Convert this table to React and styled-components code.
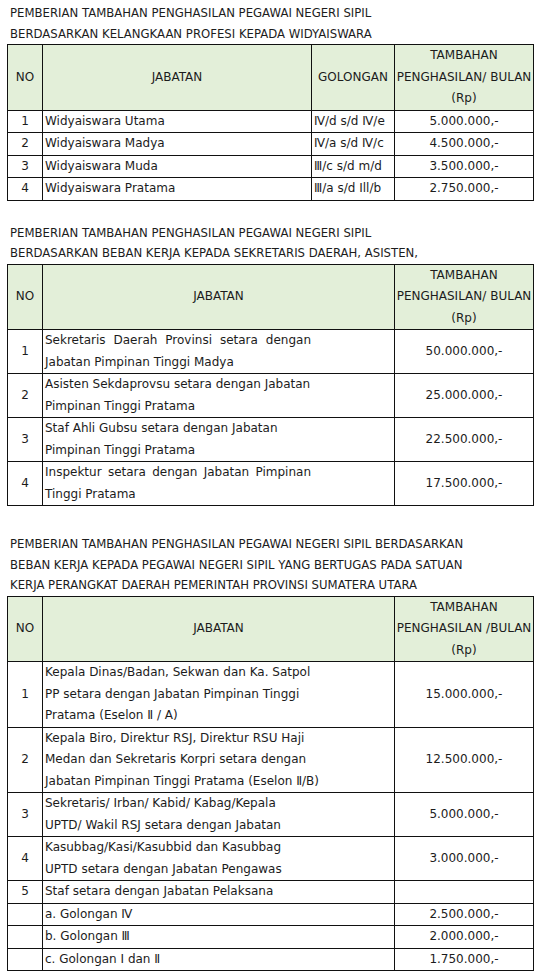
import React from 'react'
import styled, { createGlobalStyle } from 'styled-components'

const GlobalStyle = createGlobalStyle`
body {
  margin: 0;
  background: #ffffff;
  color: #1c1c1c;
  font-family: "DejaVu Sans", "Liberation Sans", sans-serif;
}
`

const Page = styled.div`
  padding: 3px 9px 8px 7px;
  display: flex;
  flex-direction: column;
`

const Section = styled.section`
  margin-top: ${p => p.$gap || 0}px;
`

const Title = styled.div`
  padding-left: 3px;
  font-size: 11.7px;
  line-height: 20.5px;
  white-space: nowrap;
`

const Table = styled.table`
  width: 526px;
  border-collapse: collapse;
  table-layout: fixed;
  font-size: 12px;
`

const Col = styled.col`
  width: ${p => p.$w}px;
`

const Head = styled.th`
  background: #e3efd9;
  border: 1px solid #111;
  font-weight: normal;
  text-align: center;
  vertical-align: middle;
  line-height: 21.5px;
  padding: 0;
  white-space: nowrap;
`

const Cell = styled.td`
  border: 1px solid #111;
  padding: 0 2px;
  line-height: 21.5px;
  text-align: ${p => p.$align || 'left'};
  vertical-align: ${p => p.$valign || 'middle'};
  white-space: nowrap;
`

const Line = styled.span`
  display: block;
  width: ${p => (p.$justify ? '266px' : 'auto')};
  text-align: ${p => (p.$justify ? 'justify' : 'left')};
  text-align-last: ${p => (p.$justify ? 'justify' : 'auto')};
`

const headAmount = (slash) => (
  <>
    TAMBAHAN<br />PENGHASILAN{slash}<br />(Rp)
  </>
)

const widyaiswara = [
  ['1', 'Widyaiswara Utama', 'Ⅳ/d s/d Ⅳ/e', '5.000.000,-'],
  ['2', 'Widyaiswara Madya', 'Ⅳ/a s/d Ⅳ/c', '4.500.000,-'],
  ['3', 'Widyaiswara Muda', 'Ⅲ/c s/d m/d', '3.500.000,-'],
  ['4', 'Widyaiswara Pratama', 'Ⅲ/a s/d Ill/b', '2.750.000,-'],
]

const sekda = [
  ['1', [['Sekretaris Daerah Provinsi setara dengan', true], ['Jabatan Pimpinan Tinggi Madya']], '50.000.000,-'],
  ['2', [['Asisten Sekdaprovsu setara dengan Jabatan'], ['Pimpinan Tinggi Pratama']], '25.000.000,-'],
  ['3', [['Staf Ahli Gubsu setara dengan Jabatan'], ['Pimpinan Tinggi Pratama']], '22.500.000,-'],
  ['4', [['Inspektur setara dengan Jabatan Pimpinan', true], ['Tinggi Pratama']], '17.500.000,-'],
]

const opd = [
  ['1', ['Kepala Dinas/Badan, Sekwan dan Ka. Satpol', 'PP setara dengan Jabatan Pimpinan Tinggi', 'Pratama (Eselon Ⅱ / A)'], '15.000.000,-'],
  ['2', ['Kepala Biro, Direktur RSJ, Direktur RSU Haji', 'Medan dan Sekretaris Korpri setara dengan', 'Jabatan Pimpinan Tinggi Pratama (Eselon Ⅱ/B)'], '12.500.000,-'],
  ['3', ['Sekretaris/ Irban/ Kabid/ Kabag/Kepala', 'UPTD/ Wakil RSJ setara dengan Jabatan'], '5.000.000,-'],
  ['4', ['Kasubbag/Kasi/Kasubbid dan Kasubbag', 'UPTD setara dengan Jabatan Pengawas'], '3.000.000,-'],
  ['5', ['Staf setara dengan Jabatan Pelaksana'], ''],
  ['', ['a. Golongan Ⅳ'], '2.500.000,-'],
  ['', ['b. Golongan Ⅲ'], '2.000.000,-'],
  ['', ['c. Golongan I dan Ⅱ'], '1.750.000,-'],
]

const App = () => {
  return (
    <Page>
      <GlobalStyle />

      <Section>
        <Title>PEMBERIAN TAMBAHAN PENGHASILAN PEGAWAI NEGERI SIPIL</Title>
        <Title>BERDASARKAN KELANGKAAN PROFESI KEPADA WIDYAISWARA</Title>
        <Table>
          <colgroup>
            <Col $w={35} />
            <Col $w={269} />
            <Col $w={83} />
            <Col $w={139} />
          </colgroup>
          <thead>
            <tr>
              <Head>NO</Head>
              <Head>JABATAN</Head>
              <Head>GOLONGAN</Head>
              <Head>{headAmount('/ BULAN')}</Head>
            </tr>
          </thead>
          <tbody>
            {widyaiswara.map(r => (
              <tr key={r[0]}>
                <Cell $align="center">{r[0]}</Cell>
                <Cell>{r[1]}</Cell>
                <Cell>{r[2]}</Cell>
                <Cell $align="center">{r[3]}</Cell>
              </tr>
            ))}
          </tbody>
        </Table>
      </Section>

      <Section $gap={22}>
        <Title>PEMBERIAN TAMBAHAN PENGHASILAN PEGAWAI NEGERI SIPIL</Title>
        <Title>BERDASARKAN BEBAN KERJA KEPADA SEKRETARIS DAERAH, ASISTEN,</Title>
        <Table>
          <colgroup>
            <Col $w={35} />
            <Col $w={352} />
            <Col $w={139} />
          </colgroup>
          <thead>
            <tr>
              <Head>NO</Head>
              <Head>JABATAN</Head>
              <Head>{headAmount('/ BULAN')}</Head>
            </tr>
          </thead>
          <tbody>
            {sekda.map(r => (
              <tr key={r[0]}>
                <Cell $align="center">{r[0]}</Cell>
                <Cell $valign="top">
                  {r[1].map(([t, j]) => (
                    <Line key={t} $justify={j}>{t}</Line>
                  ))}
                </Cell>
                <Cell $align="center">{r[2]}</Cell>
              </tr>
            ))}
          </tbody>
        </Table>
      </Section>

      <Section $gap={28}>
        <Title>PEMBERIAN TAMBAHAN PENGHASILAN PEGAWAI NEGERI SIPIL BERDASARKAN</Title>
        <Title>BEBAN KERJA KEPADA PEGAWAI NEGERI SIPIL YANG BERTUGAS PADA SATUAN</Title>
        <Title>KERJA PERANGKAT DAERAH PEMERINTAH PROVINSI SUMATERA UTARA</Title>
        <Table>
          <colgroup>
            <Col $w={35} />
            <Col $w={352} />
            <Col $w={139} />
          </colgroup>
          <thead>
            <tr>
              <Head>NO</Head>
              <Head>JABATAN</Head>
              <Head>{headAmount(' /BULAN')}</Head>
            </tr>
          </thead>
          <tbody>
            {opd.map((r, i) => (
              <tr key={i}>
                <Cell $align="center">{r[0]}</Cell>
                <Cell $valign="top">
                  {r[1].map(t => (
                    <Line key={t}>{t}</Line>
                  ))}
                </Cell>
                <Cell $align="center">{r[2]}</Cell>
              </tr>
            ))}
          </tbody>
        </Table>
      </Section>
    </Page>
  )
}

export default App
